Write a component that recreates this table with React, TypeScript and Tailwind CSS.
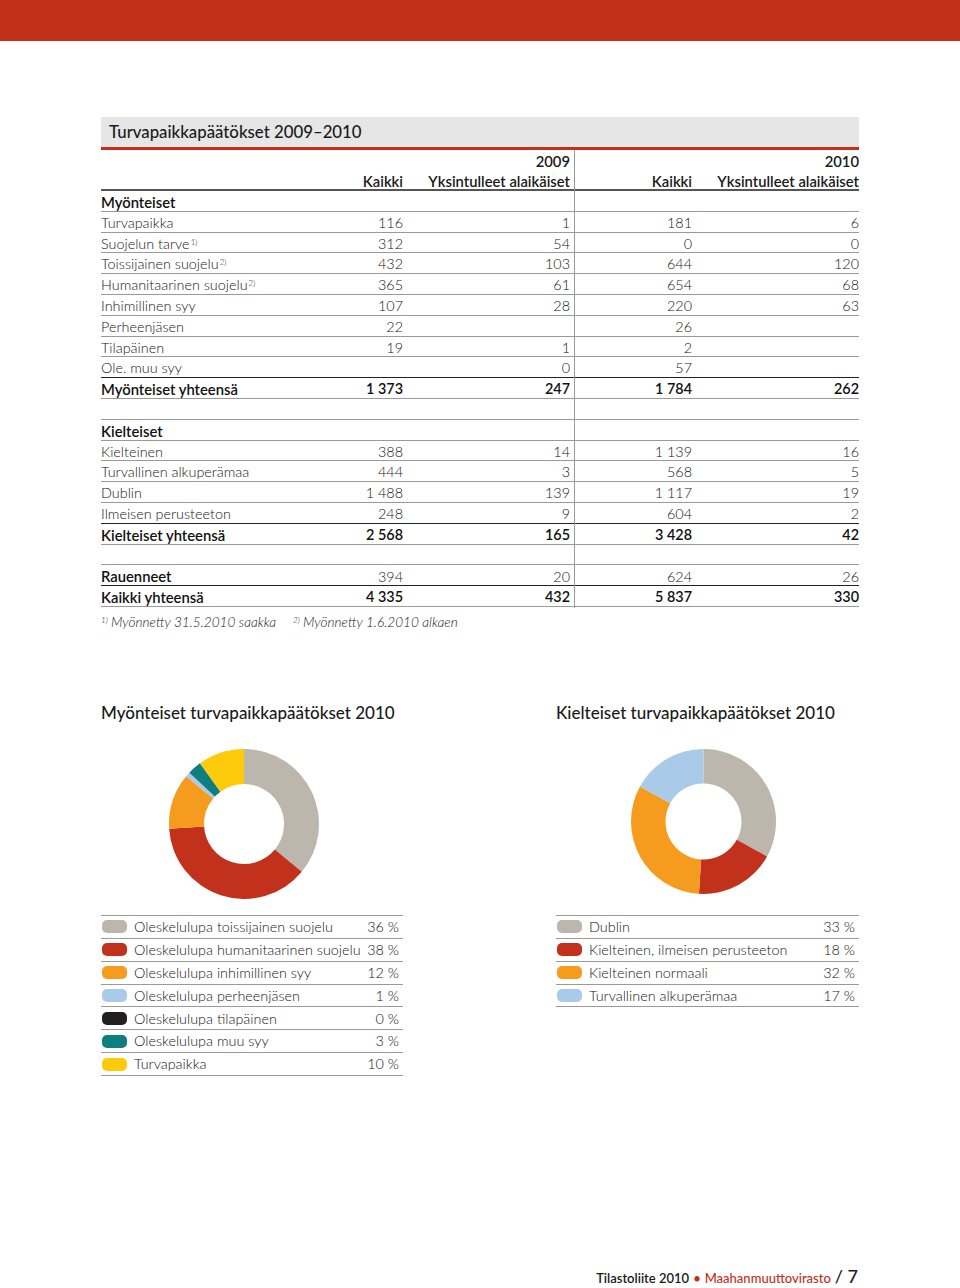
import React from 'react';

type Row = {
	label: string;
	sup?: string;
	v?: [string, string, string, string];
	kind?: 'section' | 'total' | 'blank' | 'boldLabel';
	dark?: boolean;
};

const rows: Row[] = [
	{ label: 'Myönteiset', kind: 'section' },
	{ label: 'Turvapaikka', v: ['116', '1', '181', '6'] },
	{ label: 'Suojelun tarve', sup: '1)', v: ['312', '54', '0', '0'] },
	{ label: 'Toissijainen suojelu', sup: '2)', v: ['432', '103', '644', '120'] },
	{ label: 'Humanitaarinen suojelu', sup: '2)', v: ['365', '61', '654', '68'] },
	{ label: 'Inhimillinen syy', v: ['107', '28', '220', '63'] },
	{ label: 'Perheenjäsen', v: ['22', '', '26', ''] },
	{ label: 'Tilapäinen', v: ['19', '1', '2', ''] },
	{ label: 'Ole. muu syy', v: ['', '0', '57', ''], dark: true },
	{ label: 'Myönteiset yhteensä', v: ['1 373', '247', '1 784', '262'], kind: 'total' },
	{ label: '', kind: 'blank' },
	{ label: 'Kielteiset', kind: 'section' },
	{ label: 'Kielteinen', v: ['388', '14', '1 139', '16'] },
	{ label: 'Turvallinen alkuperämaa', v: ['444', '3', '568', '5'] },
	{ label: 'Dublin', v: ['1 488', '139', '1 117', '19'] },
	{ label: 'Ilmeisen perusteeton', v: ['248', '9', '604', '2'], dark: true },
	{ label: 'Kielteiset yhteensä', v: ['2 568', '165', '3 428', '42'], kind: 'total' },
	{ label: '', kind: 'blank' },
	{ label: 'Rauenneet', v: ['394', '20', '624', '26'], kind: 'boldLabel', dark: true },
	{ label: 'Kaikki yhteensä', v: ['4 335', '432', '5 837', '330'], kind: 'total' },
];

const myonteiset = [
	{ label: 'Oleskelulupa toissijainen suojelu', pct: 36, color: '#bdb6ac' },
	{ label: 'Oleskelulupa humanitaarinen suojelu', pct: 38, color: '#c1311c' },
	{ label: 'Oleskelulupa inhimillinen syy', pct: 12, color: '#f59c1e' },
	{ label: 'Oleskelulupa perheenjäsen', pct: 1, color: '#a9cbe9' },
	{ label: 'Oleskelulupa tilapäinen', pct: 0, color: '#231f20' },
	{ label: 'Oleskelulupa muu syy', pct: 3, color: '#0e7e7f' },
	{ label: 'Turvapaikka', pct: 10, color: '#fecb0c' },
];

const kielteiset = [
	{ label: 'Dublin', pct: 33, color: '#bdb6ac' },
	{ label: 'Kielteinen, ilmeisen perusteeton', pct: 18, color: '#c1311c' },
	{ label: 'Kielteinen normaali', pct: 32, color: '#f59c1e' },
	{ label: 'Turvallinen alkuperämaa', pct: 17, color: '#a9cbe9' },
];

type Slice = { label: string; pct: number; color: string };

function Donut({ data, cx, cy, r, r0 }: { data: Slice[]; cx: number; cy: number; r: number; r0: number }) {
	let acc = 0;
	const pt = (rad: number, f: number) => {
		const a = f * Math.PI * 2 - Math.PI / 2;
		return `${cx + rad * Math.cos(a)} ${cy + rad * Math.sin(a)}`;
	};
	return (
		<svg width="302" height="170" viewBox="0 0 302 170">
			{data.map((s) => {
				const f0 = acc / 100;
				acc += s.pct;
				const f1 = acc / 100;
				if (s.pct === 0) return null;
				const large = f1 - f0 > 0.5 ? 1 : 0;
				const d = `M ${pt(r, f0)} A ${r} ${r} 0 ${large} 1 ${pt(r, f1)} L ${pt(r0, f1)} A ${r0} ${r0} 0 ${large} 0 ${pt(r0, f0)} Z`;
				return <path key={s.label} d={d} fill={s.color} />;
			})}
		</svg>
	);
}

function Legend({ data }: { data: Slice[] }) {
	return (
		<div className="border-t border-[#9a9a9a]">
			{data.map((s) => (
				<div key={s.label} className="flex h-[22.9px] items-center border-b border-[#9a9a9a] pr-[4px] text-[14.4px] font-light text-[#151515]">
					<span className="ml-[1px] h-[13px] w-[25px] rounded-[5px]" style={{ backgroundColor: s.color }} />
					<span className="ml-[7px] flex-1">{s.label}</span>
					<span>{s.pct} %</span>
				</div>
			))}
		</div>
	);
}

export default function App() {
	const cols = 'grid grid-cols-[232px_70px_167px_5px_117px_167px]';

	return (
		<div className="flex h-[1288px] w-[960px] flex-col bg-white font-['Lato',sans-serif] text-[#151515]">
			<div className="h-[41px] bg-[#c1311a]" />

			<div className="mx-[101px] mt-[76px]">
				<div className="flex h-[30px] items-center bg-[#e6e6e6] pl-[8px] text-[16.8px] font-medium text-[#1a1a1a]">
					Turvapaikkapäätökset 2009–2010
				</div>
				<div className="h-[3px] bg-[#c1311a]" />

				{/* header */}
				<div className={`${cols} h-[20px] items-center text-[14.8px] font-semibold text-[#1a1a1a]`}>
					<span />
					<span />
					<span className="text-right">2009</span>
					<span className="h-full border-r border-[#9a9a9a]" />
					<span />
					<span className="text-right">2010</span>
				</div>
				<div className={`${cols} h-[21px] items-center border-b-2 border-[#555] text-[14.8px] font-semibold text-[#1a1a1a]`}>
					<span />
					<span className="text-right">Kaikki</span>
					<span className="text-right">Yksintulleet alaikäiset</span>
					<span className="h-full border-r border-[#9a9a9a]" />
					<span className="text-right">Kaikki</span>
					<span className="text-right">Yksintulleet alaikäiset</span>
				</div>

				{rows.map((r, i) => {
					const bold = r.kind === 'total';
					const labelBold = bold || r.kind === 'section' || r.kind === 'boldLabel';
					const v = r.v ?? ['', '', '', ''];
					return (
						<div
							key={i}
							className={`${cols} h-[20.8px] items-center border-b text-[14.4px] ${r.dark ? 'border-[#222]' : 'border-[#9a9a9a]'} ${bold ? 'font-semibold text-[#111]' : 'font-light'}`}
						>
							<span className={`whitespace-nowrap ${labelBold ? 'text-[14.8px] font-semibold text-[#111]' : ''}`}>
								{r.label}
								{r.sup && <sup className="ml-[1px] text-[8px]">{r.sup}</sup>}
							</span>
							<span className="text-right">{v[0]}</span>
							<span className="text-right">{v[1]}</span>
							<span className="h-full border-r border-[#9a9a9a]" />
							<span className="text-right">{v[2]}</span>
							<span className="text-right">{v[3]}</span>
						</div>
					);
				})}

				<div className="mt-[5px] flex text-[13.6px] font-light italic text-[#151515]">
					<span className="w-[192px]">
						<sup className="text-[8px]">1)</sup> Myönnetty 31.5.2010 saakka
					</span>
					<span>
						<sup className="text-[8px]">2)</sup> Myönnetty 1.6.2010 alkaen
					</span>
				</div>
			</div>

			<div className="mx-[101px] mt-[68px] flex gap-[153px]">
				<div className="w-[302px]">
					<h2 className="text-[17px] font-medium text-[#1a1a1a]">Myönteiset turvapaikkapäätökset 2010</h2>
					<div className="mt-[16px]">
						<Donut data={myonteiset} cx={143} cy={82} r={75} r0={40} />
					</div>
					<div className="mt-[3px]">
						<Legend data={myonteiset} />
					</div>
				</div>
				<div className="w-[303px]">
					<h2 className="text-[17px] font-medium text-[#1a1a1a]">Kielteiset turvapaikkapäätökset 2010</h2>
					<div className="mt-[16px]">
						<Donut data={kielteiset} cx={147.5} cy={79.5} r={72.5} r0={38} />
					</div>
					<div className="mt-[3px]">
						<Legend data={kielteiset} />
					</div>
				</div>
			</div>

			<div className="mt-auto mb-[3px] mr-[102px] flex h-[22px] items-baseline justify-end gap-[4px] text-[13px] font-semibold">
				<span className="text-[#1a1a1a]">Tilastoliite 2010</span>
				<span className="text-[#c1311a]">•</span>
				<span className="font-medium text-[#c1311a]">Maahanmuuttovirasto</span>
				<span className="text-[18px] font-medium text-[#1a1a1a]">/ 7</span>
			</div>
		</div>
	);
}
